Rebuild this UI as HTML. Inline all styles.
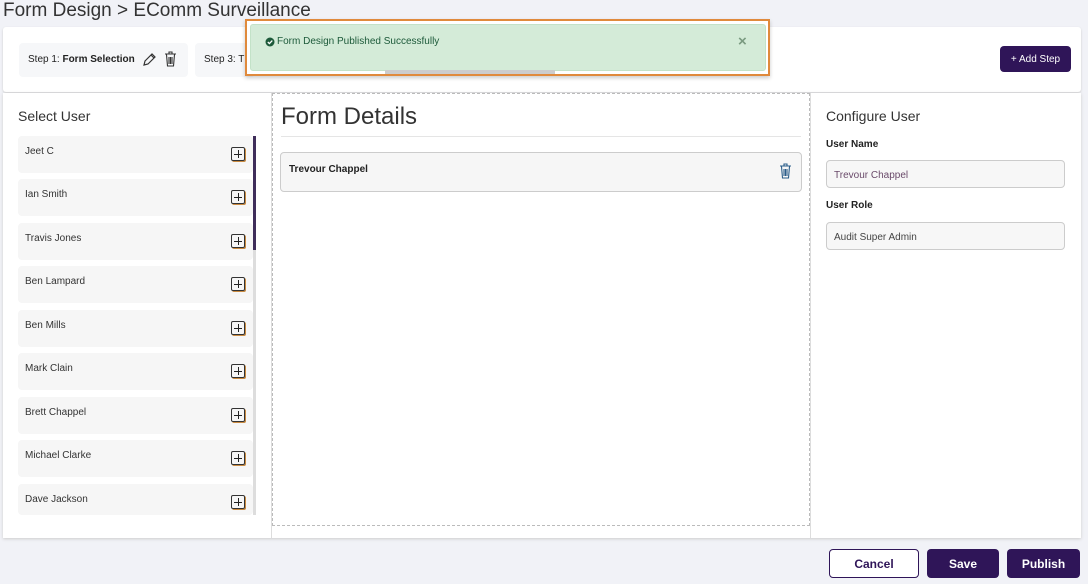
<!DOCTYPE html><html><head><style>
body{margin:0;width:1088px;height:584px;background:#f1f2f7;font-family:"Liberation Sans",sans-serif;position:relative;overflow:hidden;color:#222}
.a{position:absolute}
.item{position:absolute;left:18px;width:235px;height:37px;background:#f6f6f6;border-radius:4px;font-size:10px;color:#333}
.item span{position:absolute;left:7px;top:10px}
.plus{position:absolute;left:213px;top:11px;width:12px;height:12px;border:1px solid #333;border-radius:2px;box-shadow:1px 1px 0 #c98a40}
.plus:before{content:"";position:absolute;left:2px;top:5.5px;width:8px;height:1px;background:#222}
.plus:after{content:"";position:absolute;left:5.5px;top:2px;width:1px;height:8px;background:#222}
.btn{position:absolute;top:549px;height:29px;border-radius:4px;font-size:12px;font-weight:bold;display:flex;align-items:center;justify-content:center;box-sizing:border-box;padding-top:1px}
.inp{position:absolute;left:826px;width:239px;height:28px;box-sizing:border-box;border:1px solid #ccc;border-radius:4px;background:#f7f7f7;font-size:10px;padding:9px 7px}
</style></head><body>
<div class="a" style="left:3px;top:0;font-size:19px;color:#333">Form Design &gt; EComm Surveillance</div>
<div class="a" style="left:3px;top:27px;width:1078px;height:65px;background:#fff;border-radius:3px;box-shadow:0 1px 2px #ccc"></div>
<div class="a" style="left:19px;top:43px;width:169px;height:34px;background:#f6f7f9;border-radius:4px;font-size:10px"><span class="a" style="left:9px;top:11px">Step 1: <b>Form Selection</b></span>
<svg class="a" style="left:123px;top:9px" width="15" height="15" viewBox="0 0 15 15"><path d="M2 13l1-4 7-7 3 3-7 7z M9 3l3 3" fill="none" stroke="#333" stroke-width="1.2"/></svg>
<svg class="a" style="left:145px;top:8px" width="13" height="16" viewBox="0 0 13 16"><path d="M1 3h11M5 3V1h3v2M2.5 3.5l1 11.5h6l1-11.5M5 6v7M6.5 6v7M8 6v7" fill="none" stroke="#333" stroke-width="1.1"/></svg></div>
<div class="a" style="left:195px;top:43px;width:60px;height:34px;background:#f6f7f9;border-radius:4px;font-size:10px"><span class="a" style="left:9px;top:11px">Step 3: T</span></div>
<div class="a" style="left:1000px;top:46px;width:71px;height:26px;background:#2f1558;border-radius:4px;color:#fff;font-size:10px;display:flex;align-items:center;justify-content:center">+ Add Step</div>
<div class="a" style="left:3px;top:93px;width:1078px;height:445px;background:#fff;box-shadow:0 1px 3px #ccc"></div>
<div class="a" style="left:18px;top:108px;font-size:14px;color:#333">Select User</div>
<div class="item" style="top:136px"><span>Jeet C</span><div class="plus"></div></div>
<div class="item" style="top:179px"><span>Ian Smith</span><div class="plus"></div></div>
<div class="item" style="top:223px"><span>Travis Jones</span><div class="plus"></div></div>
<div class="item" style="top:266px"><span>Ben Lampard</span><div class="plus"></div></div>
<div class="item" style="top:310px"><span>Ben Mills</span><div class="plus"></div></div>
<div class="item" style="top:353px"><span>Mark Clain</span><div class="plus"></div></div>
<div class="item" style="top:397px"><span>Brett Chappel</span><div class="plus"></div></div>
<div class="item" style="top:440px"><span>Michael Clarke</span><div class="plus"></div></div>
<div class="item" style="top:484px;height:31px"><span>Dave Jackson</span><div class="plus"></div></div>
<div class="a" style="left:253px;top:136px;width:3px;height:379px;background:#ddd"></div>
<div class="a" style="left:253px;top:136px;width:3px;height:114px;background:#3f2d5a"></div>
<div class="a" style="left:271px;top:93px;width:1px;height:445px;background:#ddd"></div>
<div class="a" style="left:272px;top:93px;width:536px;height:431px;border:1px dashed #bbb"></div>
<div class="a" style="left:810px;top:93px;width:1px;height:445px;background:#ddd"></div>
<div class="a" style="left:281px;top:103px;font-size:24px;color:#333">Form Details</div>
<div class="a" style="left:281px;top:136px;width:520px;height:1px;background:#e5e5e5"></div>
<div class="a" style="left:280px;top:152px;width:520px;height:38px;background:#f6f6f6;border:1px solid #ccc;border-radius:4px"><b class="a" style="left:8px;top:11px;font-size:10px">Trevour Chappel</b>
<svg class="a" style="left:498px;top:10px" width="13" height="16" viewBox="0 0 13 16"><path d="M1 3h11M5 3V1h3v2M2.5 3.5l1 11.5h6l1-11.5M5 6v7M6.5 6v7M8 6v7" fill="none" stroke="#2a5d8a" stroke-width="1.1"/></svg></div>
<div class="a" style="left:826px;top:108px;font-size:14px;color:#333">Configure User</div>
<b class="a" style="left:826px;top:139px;font-size:10px">User Name</b>
<div class="inp" style="top:160px;color:#6a4a6a">Trevour Chappel</div>
<b class="a" style="left:826px;top:200px;font-size:10px">User Role</b>
<div class="inp" style="top:222px;color:#444">Audit Super Admin</div>
<div class="btn" style="left:829px;width:90px;border:1px solid #2f1558;background:#fff;color:#2f1558">Cancel</div>
<div class="btn" style="left:927px;width:72px;background:#2f1558;color:#fff">Save</div>
<div class="btn" style="left:1007px;width:73px;background:#2f1558;color:#fff">Publish</div>
<div class="a" style="left:245px;top:19px;width:521px;height:53px;border:2px solid #e08a3c;background:#fff;box-shadow:0 2px 4px rgba(0,0,0,.2)"></div>
<div class="a" style="left:250px;top:24px;width:514px;height:45px;background:#d4ebd8;border:1px solid #c3e2c8;border-radius:3px;font-size:10px;color:#1d5a3a">
<svg class="a" style="left:14px;top:12px" width="10" height="10" viewBox="0 0 10 10"><circle cx="5" cy="5" r="4.5" fill="#1d5a3a"/><path d="M2.8 5l1.6 1.6 2.9-3" fill="none" stroke="#fff" stroke-width="1.3"/></svg>
<span class="a" style="left:26px;top:11px">Form Design Published Successfully</span>
<span class="a" style="left:487px;top:8px;font-size:15px;color:#7a9a80;font-weight:bold">×</span></div>
<div class="a" style="left:385px;top:70px;width:170px;height:4px;background:#ccc"></div>
</body></html>
